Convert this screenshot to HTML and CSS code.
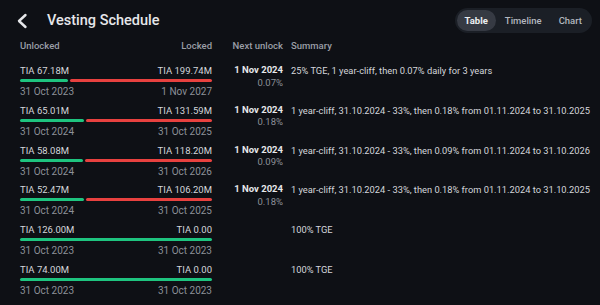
FILE: index.html
```html
<!DOCTYPE html>
<html lang="en">
<head>
    <meta charset="UTF-8">
    <meta name="viewport" content="width=device-width, initial-scale=1.0">
    <link rel="stylesheet" href="styles.css">
    <title>Vesting Schedule</title>
</head>
<body>
    <header class="topbar">
        <button class="back" aria-label="Back">
            <svg width="12" height="16" viewBox="0 0 12 16"><path d="M9.5 2 L3 8 L9.5 14" fill="none" stroke="currentColor" stroke-width="2.4" stroke-linecap="round" stroke-linejoin="round"/></svg>
        </button>
        <h1 class="title">Vesting Schedule</h1>
        <nav class="tabs">
            <span class="tab tab--active">Table</span>
            <span class="tab">Timeline</span>
            <span class="tab">Chart</span>
        </nav>
    </header>

    <div class="schedule">
        <div class="row row--head">
            <div class="range-head"><span>Unlocked</span><span>Locked</span></div>
            <div class="next">Next unlock</div>
            <div>Summary</div>
        </div>

        <div class="row">
            <div class="range">
                <div class="line"><span>TIA 67.18M</span><span>TIA 199.74M</span></div>
                <div class="bar"><i class="bar-green" style="width: 25.2%"></i><i class="bar-red"></i></div>
                <div class="line line--date"><span>31 Oct 2023</span><span>1 Nov 2027</span></div>
            </div>
            <div class="next"><b>1 Nov 2024</b><span>0.07%</span></div>
            <div class="summary">25% TGE, 1 year-cliff, then 0.07% daily for 3 years</div>
        </div>

        <div class="row">
            <div class="range">
                <div class="line"><span>TIA 65.01M</span><span>TIA 131.59M</span></div>
                <div class="bar"><i class="bar-green" style="width: 33.1%"></i><i class="bar-red"></i></div>
                <div class="line line--date"><span>31 Oct 2024</span><span>31 Oct 2025</span></div>
            </div>
            <div class="next"><b>1 Nov 2024</b><span>0.18%</span></div>
            <div class="summary">1 year-cliff, 31.10.2024 - 33%, then 0.18% from 01.11.2024 to 31.10.2025</div>
        </div>

        <div class="row">
            <div class="range">
                <div class="line"><span>TIA 58.08M</span><span>TIA 118.20M</span></div>
                <div class="bar"><i class="bar-green" style="width: 32.9%"></i><i class="bar-red"></i></div>
                <div class="line line--date"><span>31 Oct 2024</span><span>31 Oct 2026</span></div>
            </div>
            <div class="next"><b>1 Nov 2024</b><span>0.09%</span></div>
            <div class="summary">1 year-cliff, 31.10.2024 - 33%, then 0.09% from 01.11.2024 to 31.10.2026</div>
        </div>

        <div class="row">
            <div class="range">
                <div class="line"><span>TIA 52.47M</span><span>TIA 106.20M</span></div>
                <div class="bar"><i class="bar-green" style="width: 33.1%"></i><i class="bar-red"></i></div>
                <div class="line line--date"><span>31 Oct 2024</span><span>31 Oct 2025</span></div>
            </div>
            <div class="next"><b>1 Nov 2024</b><span>0.18%</span></div>
            <div class="summary">1 year-cliff, 31.10.2024 - 33%, then 0.18% from 01.11.2024 to 31.10.2025</div>
        </div>

        <div class="row">
            <div class="range">
                <div class="line"><span>TIA 126.00M</span><span>TIA 0.00</span></div>
                <div class="bar"><i class="bar-green bar-full"></i></div>
                <div class="line line--date"><span>31 Oct 2023</span><span>31 Oct 2023</span></div>
            </div>
            <div class="next"></div>
            <div class="summary">100% TGE</div>
        </div>

        <div class="row">
            <div class="range">
                <div class="line"><span>TIA 74.00M</span><span>TIA 0.00</span></div>
                <div class="bar"><i class="bar-green bar-full"></i></div>
                <div class="line line--date"><span>31 Oct 2023</span><span>31 Oct 2023</span></div>
            </div>
            <div class="next"></div>
            <div class="summary">100% TGE</div>
        </div>
    </div>
</body>
</html>
```

FILE: styles.css
```css
* {
    box-sizing: border-box;
}

body {
    margin: 0;
    background-color: #0e1015;
    color: #d4d6db;
    font-family: Roboto, "Noto Sans", sans-serif;
    font-size: 9.5px;
}

.topbar {
    display: flex;
    align-items: center;
    height: 40px;
    padding: 1px 8px 0 16px;
}

.back {
    display: flex;
    padding: 0;
    border: 0;
    background: none;
    color: #e6e7ea;
}

.title {
    margin: 0 0 0 19px;
    font-size: 14.5px;
    font-weight: 500;
    color: #e6e7ea;
}

.tabs {
    display: flex;
    gap: 1px;
    margin-left: auto;
    padding: 2px;
    border-radius: 13px;
    background-color: #1b1f26;
}

.tab {
    padding: 5px 8px;
    border-radius: 11px;
    font-size: 9.5px;
    font-weight: 500;
    color: #b3b7bf;
}

.tab--active {
    background-color: #363a43;
    color: #eceef1;
    font-weight: 700;
}

.schedule {
    padding: 0 0 0 20px;
}

.row {
    display: grid;
    grid-template-columns: 192px 63px 1fr;
    column-gap: 8px;
    height: 39.8px;
}

.row--head {
    height: 24px;
    line-height: 11px;
    font-weight: 500;
    color: #9a9ea6;
}

.range-head,
.line {
    display: flex;
    justify-content: space-between;
}

.line {
    height: 13px;
    line-height: 13px;
}

.line--date {
    color: #8d9199;
    font-size: 10px;
}

.bar {
    display: flex;
    gap: 2px;
    height: 3px;
    margin: 2px 0 3px;
}

.bar i {
    display: block;
    height: 3px;
    border-radius: 2px;
}

.bar-green {
    background-color: #1ec47f;
}

.bar-red {
    flex: 1;
    background-color: #e8413f;
}

.bar-full {
    width: 100%;
}

.next {
    display: flex;
    flex-direction: column;
    align-items: flex-end;
    line-height: 12.5px;
}

.next b {
    font-weight: 700;
    color: #e6e7ea;
}

.next span {
    color: #8d9199;
}

.summary {
    font-size: 9.3px;
    line-height: 13px;
}
```
